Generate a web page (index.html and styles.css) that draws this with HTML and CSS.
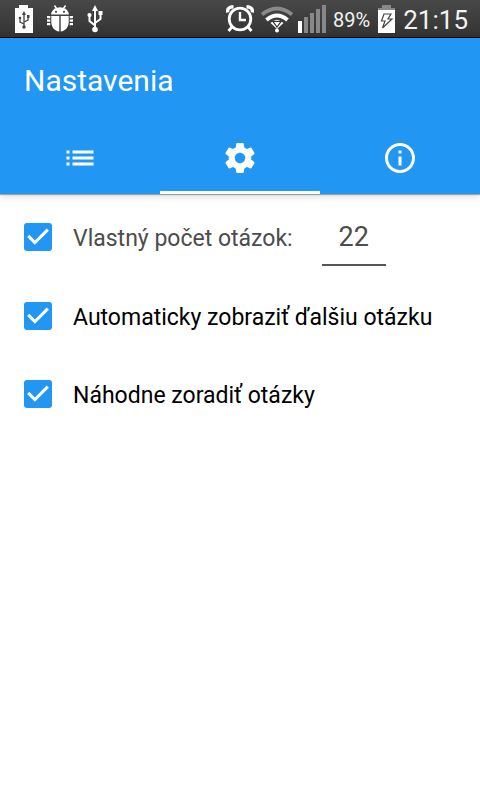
FILE: index.html
```html
<!DOCTYPE html>
<html lang="sk">
<head>
<meta charset="utf-8">
<meta name="viewport" content="width=device-width, initial-scale=1">
<title>Nastavenia</title>
<link rel="stylesheet" href="styles.css">
</head>
<body>
<div class="status">
  <div class="status-left">
    <svg width="18" height="28" viewBox="0 0 18 28" fill="none">
      <path d="M4 0h9v3h5v25H0V3h4z" fill="#fff"/>
      <path d="M9 8v14M9 19l-4-2v-4M9 17l4-2v-4" stroke="#444" stroke-width="1.3"/>
      <path d="M9 6l2 4H7z" fill="#444"/><circle cx="9" cy="22" r="1.7" fill="#444"/><circle cx="5" cy="13" r="1.3" fill="#444"/><path d="M12 10h2.5v3H12z" fill="#444"/>
    </svg>
    <svg width="26" height="27" viewBox="0 0 26 27" fill="#fff">
      <path d="M4 9.500C4.500 6 6.500 4.200 8.500 3.300L6.800 1 8 .1l2 2.700q3-1 6 0l2-2.700 1.200.9-1.700 2.300c2 .9 4 2.700 4.500 6.200z"/>
      <path d="M4.300 11h8v15.500C7.500 26 4.300 22 4.300 17zM13.700 11h8v6c0 5-3.200 9-8 9.500z"/>
      <path d="M0 11h3.300v2.300H0zM0 14.500h3.300v2.300H0zM0 18h3.300v2.300H0zM22.700 11H26v2.300h-3.300zM22.700 14.500H26v2.300h-3.300zM22.700 18H26v2.300h-3.300z"/>
      <circle cx="9" cy="6.800" r="1.100" fill="#444"/><circle cx="17" cy="6.800" r="1.100" fill="#444"/>
    </svg>
    <svg width="16" height="28" viewBox="0 0 16 28" fill="none">
      <path d="M8 4v20M8 20.500l-5.500-4.500V10M8 18l5.500-4V9" stroke="#fff" stroke-width="2"/>
      <path d="M8 0l3 6H5z" fill="#fff"/><circle cx="8" cy="24.500" r="2.800" fill="#fff"/><circle cx="2.500" cy="10" r="2.100" fill="#fff"/><path d="M11.500 6h4v4h-4z" fill="#fff"/>
    </svg>
  </div>
  <div class="status-right">
    <svg width="28" height="28" viewBox="0 0 28 28" fill="none" stroke="#fff">
      <circle cx="14" cy="14" r="10.800" stroke-width="2.800"/>
      <path d="M14 7v8h6" stroke-width="2.400"/>
      <path d="M1.500 7.500Q1 2 7.500 1.800M26.500 7.500Q27 2 20.500 1.800" stroke-width="3.400"/>
      <path d="M6 22l-3.500 4M22 22l3.500 4" stroke-width="2.800"/>
    </svg>
    <svg class="wifi" width="34" height="28" viewBox="0 0 34 28" fill="none">
      <path d="M2 9.500Q17-2.500 32 9.500" stroke="#8a8a8a" stroke-width="4"/>
      <path d="M6.500 15Q17 6 27.500 15" stroke="#fff" stroke-width="4"/>
      <path d="M10.500 18Q17 12 23.500 18L17 24z" fill="#fff"/>
      <path d="M13 16.500h8l-4 5.500z" fill="#fff" stroke="#333" stroke-width="1.200"/>
      <circle cx="17" cy="25.500" r="2" fill="#fff"/>
    </svg>
    <svg class="signal" width="28" height="28" viewBox="0 0 28 28" fill="#888">
      <path d="M0 16h4v12H0z" fill="#fff"/><path d="M6 12h4v16H6zM12 8h4v20h-4zM18 4h4v24h-4zM24 0h4v28h-4z"/>
    </svg>
    <span class="percent">89%</span>
    <svg class="battery" width="17" height="28" viewBox="0 0 17 28" fill="none">
      <path d="M4 0h9v3h4v3H0V3h4z" fill="#888"/>
      <path d="M0 5h17v23H0z" fill="#fff"/>
      <path d="M6 9h7l-3 5h4L4.500 23l2.500-7H3.500z" stroke="#444" stroke-width="1.200"/>
    </svg>
    <time class="clock">21:15</time>
  </div>
</div>
<header class="appbar">
  <h1>Nastavenia</h1>
  <nav class="tabs">
    <button class="tab" type="button" aria-label="Zoznam">
      <svg width="36" height="36" viewBox="0 0 24 24" fill="#fff"><path d="M3 13h2v-2H3v2zm0 4h2v-2H3v2zm0-8h2V7H3v2zm4 4h14v-2H7v2zm0 4h14v-2H7v2zM7 7v2h14V7H7z"/></svg>
    </button>
    <button class="tab active" type="button" aria-label="Nastavenia">
      <svg width="36" height="36" viewBox="0 0 24 24" fill="#fff"><path d="M19.430 12.980c.04-.32.070-.64.070-.98s-.03-.66-.07-.98l2.110-1.650c.19-.15.240-.42.120-.64l-2-3.460c-.12-.22-.39-.3-.61-.22l-2.490 1c-.52-.4-1.080-.73-1.690-.98l-.38-2.650C14.460 2.180 14.250 2 14 2h-4c-.25 0-.46.180-.49.420l-.38 2.650c-.61.250-1.170.590-1.690.98l-2.490-1c-.23-.09-.49 0-.61.220l-2 3.460c-.13.220-.07.490.12.640l2.110 1.650c-.04.320-.07.650-.07.980s.03.660.07.980l-2.110 1.650c-.19.150-.24.420-.12.640l2 3.460c.12.220.39.300.61.220l2.490-1c.52.400 1.080.730 1.690.98l.38 2.650c.03.240.240.420.490.420h4c.25 0 .46-.18.490-.42l.38-2.650c.61-.25 1.170-.59 1.690-.98l2.490 1c.23.090.490 0 .61-.22l2-3.460c.12-.22.070-.49-.12-.64zM12 15.500c-1.930 0-3.500-1.570-3.500-3.500s1.570-3.500 3.500-3.500 3.500 1.570 3.500 3.500-1.570 3.500-3.500 3.500z"/></svg>
    </button>
    <button class="tab" type="button" aria-label="Informácie">
      <svg width="36" height="36" viewBox="0 0 24 24" fill="#fff"><path d="M11 17h2v-6h-2zm1-15C6.480 2 2 6.480 2 12s4.480 10 10 10 10-4.480 10-10S17.520 2 12 2zm0 18c-4.410 0-8-3.590-8-8s3.590-8 8-8 8 3.590 8 8-3.590 8-8 8zM11 9h2V7h-2z"/></svg>
    </button>
  </nav>
</header>
<main class="settings">
  <div class="row row-count">
    <span class="check"><input type="checkbox" id="custom" checked><svg viewBox="3 3 18 18" fill="#fff"><path d="M10 17l-5-5 1.400-1.400L10 14.200l7.600-7.600L19 8z"/></svg></span>
    <label class="muted" for="custom">Vlastný počet otázok:</label>
    <input class="count" type="text" inputmode="numeric" value="22" aria-label="Počet otázok">
  </div>
  <div class="row">
    <span class="check"><input type="checkbox" id="auto" checked><svg viewBox="3 3 18 18" fill="#fff"><path d="M10 17l-5-5 1.400-1.400L10 14.200l7.600-7.600L19 8z"/></svg></span>
    <label for="auto">Automaticky zobraziť ďalšiu otázku</label>
  </div>
  <div class="row">
    <span class="check"><input type="checkbox" id="random" checked><svg viewBox="3 3 18 18" fill="#fff"><path d="M10 17l-5-5 1.400-1.400L10 14.200l7.600-7.600L19 8z"/></svg></span>
    <label for="random">Náhodne zoradiť otázky</label>
  </div>
</main>
</body>
</html>
```
FILE: styles.css
```css
* { box-sizing: border-box; }
body {
  margin: 0;
  background: #fff;
  color: #000;
  font-family: Roboto, "Noto Sans", sans-serif;
}
svg { display: block; flex: none; }
.status {
  display: flex;
  justify-content: space-between;
  height: 38px;
  padding: 0 12px 0 15px;
  background: linear-gradient(#484848, #333);
  border-bottom: 1px solid #000;
  color: #f2f2f2;
}
.status-left, .status-right { display: flex; align-items: center; }
.status-left { gap: 14px; }
.wifi { margin-left: 6px; }
.signal { margin-left: 4px; }
.percent { margin-left: 7px; padding-top: 2px; font-size: 20px; line-height: 28px; }
.battery { margin: 0 8px; }
.clock { padding-top: 3px; font-size: 26px; line-height: 34px; }
.appbar {
  background: #2196f3;
  box-shadow: 0 1px 1px rgba(0, 0, 0, .3), 0 2px 8px rgba(0, 0, 0, .15);
}
h1 {
  margin: 0;
  padding: 24px 24px 23px;
  color: #fff;
  font-size: 30px;
  font-weight: 400;
  line-height: 37px;
}
.tabs { display: flex; }
.tab {
  flex: 1;
  display: flex;
  justify-content: center;
  height: 72px;
  padding: 18px 0;
  border: 0;
  border-bottom: 3px solid transparent;
  background: none;
}
.tab.active { border-bottom-color: #fff; }
.settings { padding: 4px 24px; }
.row { display: flex; align-items: center; height: 78px; }
.row-count { margin-bottom: 1px; }
.check { display: grid; width: 28px; height: 28px; margin-right: 21px; }
.check > * { grid-area: 1 / 1; width: 28px; height: 28px; margin: 0; }
.check input { appearance: none; border-radius: 3px; background: #2196f3; }
.check svg { pointer-events: none; }
label { padding-top: 4px; font-size: 23px; line-height: 32px; }
.muted { color: #4c4c4c; }
.count {
  width: 64px;
  height: 58px;
  margin-left: 29px;
  padding: 2px 0 0;
  border: 0;
  border-bottom: 2px solid #555;
  background: none;
  color: #4c4c4c;
  font: 27px Roboto, "Noto Sans", sans-serif;
  text-align: center;
}
```
